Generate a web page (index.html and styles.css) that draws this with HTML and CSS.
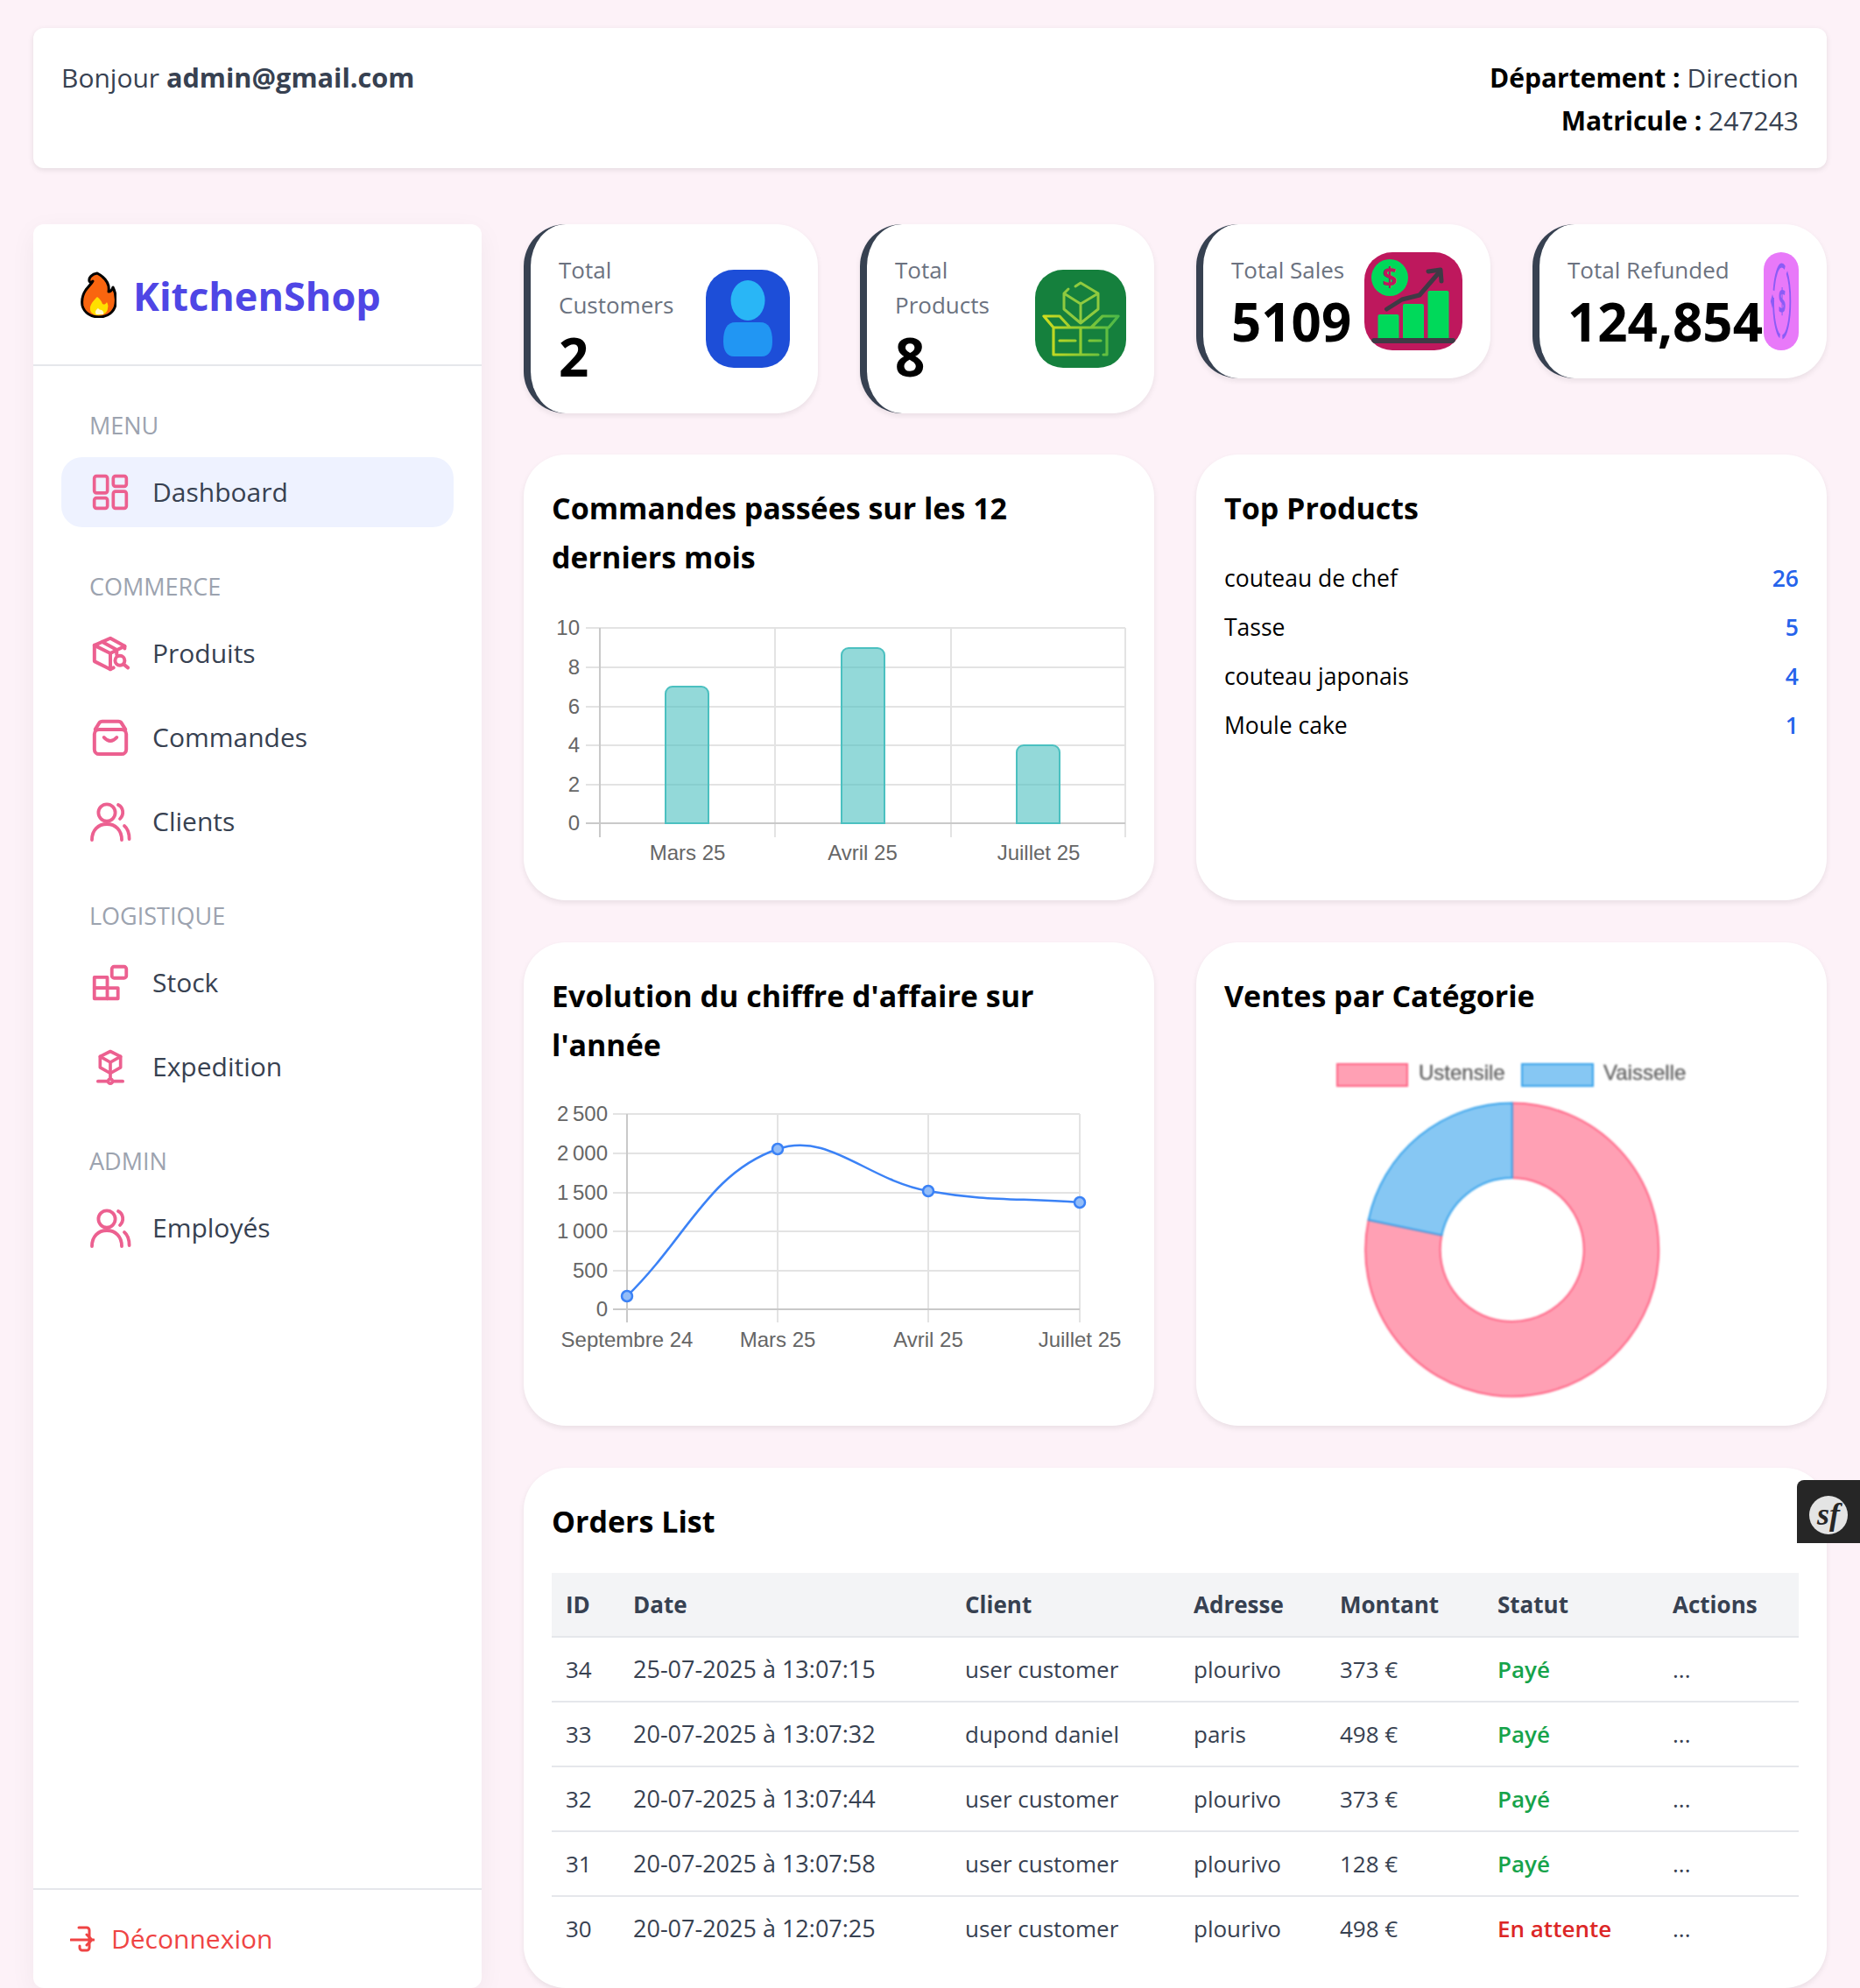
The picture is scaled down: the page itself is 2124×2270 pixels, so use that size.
FILE: index.html
```html
<!DOCTYPE html>
<html lang="fr">

<head>
    <meta charset="UTF-8">
    <meta name="viewport" content="width=device-width, initial-scale=1.0">
    <title>KitchenShop - Dashboard</title>
    <link rel="stylesheet" href="styles.css">
</head>

<body>
    <header class="top-bar">
        <div>Bonjour <strong class="user-mail">admin@gmail.com</strong></div>
        <div class="top-info">
            <div><strong>Département :</strong> Direction</div>
            <div><strong>Matricule :</strong> 247243</div>
        </div>
    </header>

    <div class="layout">
        <aside class="sidebar">
            <div class="logo">
                <svg class="flame" viewBox="0 0 41 53">
                    <path d="M19 2C13 3 9 7 10 11C11 13 13 12 14 11C13 13 9 17 6 21C2 27 1 33 2 39C4 47 12 52 21 52C31 52 39 46 40 37C41 30 40 24 37 18C36 21 34 23 32 23C33 17 31 11 25 6C23 4 21 3 19 2Z" fill="#f9650f" stroke="#000" stroke-width="3" stroke-linejoin="round"/>
                    <path d="M19 29C15 33 10 38 11 44C12 48 16 50 20 50C26 50 31 47 31 42C32 39 31 37 30 35C28 38 27 38 25 37C24 34 22 31 19 29Z" fill="#ffdf00"/>
                    <path d="M20 42C17 44 16 47 18 49H26C27 47 26 45 24 44C22 44 21 43 20 42Z" fill="#fff8d0"/>
                </svg>
                <span>KitchenShop</span>
            </div>

            <nav class="nav">
                <div class="nav-group">
                    <div class="nav-label">MENU</div>
                    <a class="nav-link active">
                        <svg class="nav-icon" viewBox="0 0 24 24">
                            <rect x="1" y="1" width="9" height="11.5" rx="1.5"/>
                            <rect x="14" y="1" width="9" height="7" rx="1.5"/>
                            <rect x="1" y="16" width="9" height="7" rx="1.5"/>
                            <rect x="14" y="11.5" width="9" height="11.5" rx="1.5"/>
                        </svg>
                        Dashboard
                    </a>
                </div>

                <div class="nav-group">
                    <div class="nav-label">COMMERCE</div>
                    <a class="nav-link">
                        <svg class="nav-icon" viewBox="1 1 22 22">
                            <path d="M21 9V7.5L12 2.5 2 7v10l10 5 2-1"/>
                            <path d="M2 7l10 5 9-4.5M12 12v10M7 4.8l9 5v3"/>
                            <circle cx="18" cy="16.5" r="3"/>
                            <path d="M20.3 18.8L23 21"/>
                        </svg>
                        Produits
                    </a>
                    <a class="nav-link">
                        <svg class="nav-icon" viewBox="1 1 22 22">
                            <rect x="2" y="7" width="20" height="15.5" rx="3"/>
                            <path d="M2.5 7L5 3Q5.6 2 7 2H17Q18.4 2 19 3L21.5 7"/>
                            <path d="M8 12Q12 16.5 16 12"/>
                        </svg>
                        Commandes
                    </a>
                    <a class="nav-link">
                        <svg class="nav-icon people" viewBox="2 2 20 20">
                            <circle cx="10" cy="7" r="4.8"/>
                            <path d="M1.5 22.5C1.5 17 5 13.5 10 13.5S18.5 17 18.5 22.5"/>
                            <path d="M16.5 2.5C19.5 4 20 8 17.5 10.5M20 14.5C21.8 16 22.8 19 22.8 22"/>
                        </svg>
                        Clients
                    </a>
                </div>

                <div class="nav-group">
                    <div class="nav-label">LOGISTIQUE</div>
                    <a class="nav-link">
                        <svg class="nav-icon" viewBox="0.5 0.5 23 23">
                            <rect x="1.5" y="8.5" width="8.5" height="7"/>
                            <rect x="1.5" y="15.5" width="15.5" height="7"/>
                            <path d="M10 15.5v7"/>
                            <rect x="13" y="1.5" width="9.5" height="7.5" rx="1.5"/>
                        </svg>
                        Stock
                    </a>
                    <a class="nav-link">
                        <svg class="nav-icon" viewBox="0 0 24 24">
                            <path d="M12 1.5L19 5V12.5L12 16.5 5 12.5V5Z"/>
                            <path d="M5 5l7 4 7-4M12 9v7.5M12 16.5v3"/>
                            <path d="M3.5 22h6M14.5 22h6"/>
                            <circle cx="12" cy="22" r="1.5"/>
                        </svg>
                        Expedition
                    </a>
                </div>

                <div class="nav-group">
                    <div class="nav-label">ADMIN</div>
                    <a class="nav-link">
                        <svg class="nav-icon people" viewBox="2 2 20 20">
                            <circle cx="10" cy="7" r="4.8"/>
                            <path d="M1.5 22.5C1.5 17 5 13.5 10 13.5S18.5 17 18.5 22.5"/>
                            <path d="M16.5 2.5C19.5 4 20 8 17.5 10.5M20 14.5C21.8 16 22.8 19 22.8 22"/>
                        </svg>
                        Employés
                    </a>
                </div>
            </nav>

            <div class="sidebar-foot">
                <a class="logout">
                    <svg class="logout-icon" viewBox="0 0 28 30">
                        <path d="M10 2h9a3 3 0 0 1 3 3v20a3 3 0 0 1-3 3h-5a3 3 0 0 1-3-3v-2"/>
                        <path d="M1 16h26M19 10l6 6-6 6"/>
                    </svg>
                    Déconnexion
                </a>
            </div>
        </aside>

        <main class="content">
            <div class="stat-card">
                <div class="stat-text">
                    <div class="stat-label">Total Customers</div>
                    <div class="stat-value">2</div>
                </div>
                <svg class="stat-icon icon-customers" viewBox="0 0 96 112">
                    <ellipse cx="48" cy="35" rx="19.5" ry="23" fill="#29b6f6"/>
                    <path d="M20 82C20 68 24 60 34 60H62C72 60 76 68 76 82C76 92 72 99 64 99H32C24 99 20 92 20 82Z" fill="#2196f3"/>
                </svg>
            </div>

            <div class="stat-card">
                <div class="stat-text">
                    <div class="stat-label">Total Products</div>
                    <div class="stat-value">8</div>
                </div>
                <svg class="stat-icon icon-products" viewBox="0 0 104 112">
                    <defs>
                        <linearGradient id="boxGrad" x1="0" y1="0" x2="1" y2="0">
                            <stop offset="0" stop-color="#cfdc1e"/>
                            <stop offset="1" stop-color="#4cb848"/>
                        </linearGradient>
                    </defs>
                    <g fill="none" stroke="#8fca3f" stroke-width="3" stroke-linecap="round" stroke-linejoin="round">
                        <path d="M46 19L52 15 72 27V45L52 61 33 45V27L38 22M33 27L52 39 72 27M52 39V61"/>
                    </g>
                    <path d="M10 53H28L40 66H21ZM95 53H77L64 66H84ZM21 66V97H72M78 97H82V66M21 66H82M52 66V97M28 81H46M62 81H75" fill="none" stroke="url(#boxGrad)" stroke-width="3.2" stroke-linecap="round" stroke-linejoin="round"/>
                </svg>
            </div>

            <div class="stat-card">
                <div class="stat-text">
                    <div class="stat-label">Total Sales</div>
                    <div class="stat-value">5109</div>
                </div>
                <svg class="stat-icon icon-sales" viewBox="0 0 112 112">
                    <circle cx="29" cy="29" r="21" fill="#00d95a"/>
                    <text x="29" y="39" text-anchor="middle" class="dollar">$</text>
                    <rect x="15.5" y="71" width="24" height="29" rx="2" fill="#00d95a"/>
                    <rect x="44" y="59" width="24" height="41" rx="2" fill="#00d95a"/>
                    <rect x="72.5" y="44" width="24" height="56" rx="2" fill="#00d95a"/>
                    <path d="M25.5 65L43 54 63 49 84.5 24" fill="none" stroke="#3f3a45" stroke-width="5" stroke-linecap="round" stroke-linejoin="round"/>
                    <path d="M73 22L87 20 88 33" fill="none" stroke="#3f3a45" stroke-width="5" stroke-linecap="round" stroke-linejoin="round"/>
                    <rect x="8" y="98" width="96" height="6" rx="3" fill="#3f3a45"/>
                </svg>
            </div>

            <div class="stat-card">
                <div class="stat-text">
                    <div class="stat-label">Total Refunded</div>
                    <div class="stat-value">124,854</div>
                </div>
                <svg class="stat-icon icon-refund" viewBox="0 0 112 112" preserveAspectRatio="none">
                    <ellipse cx="58" cy="56" rx="27" ry="41" fill="none" stroke="#8b5cf6" stroke-width="5" stroke-dasharray="52 8"/>
                    <path d="M28 48L34 56 28 64 22 56Z" fill="#8b5cf6"/>
                    <text x="58" y="70" text-anchor="middle" class="refund-sign">$</text>
                </svg>
            </div>

            <section class="card wide">
                <h2 class="card-title">Commandes passées sur les 12 derniers mois</h2>
                <svg class="chart chart-bars" viewBox="0 0 656 315">
                    <g class="grid">
                        <path d="M39 36H655M39 81H655M39 126H655M39 170H655M39 215H655"/>
                        <path d="M255 36V275M456 36V275M655 36V275"/>
                    </g>
                    <path class="axis" d="M55 36V275M39 259H655"/>
                    <g class="bar">
                        <path d="M130 259V111a8 8 0 0 1 8-8H171a8 8 0 0 1 8 8V259Z"/>
                        <path d="M331 259V67a8 8 0 0 1 8-8H372a8 8 0 0 1 8 8V259Z"/>
                        <path d="M531 259V178a8 8 0 0 1 8-8H572a8 8 0 0 1 8 8V259Z"/>
                    </g>
                    <g class="tick-y">
                        <text x="32" y="44">10</text>
                        <text x="32" y="89">8</text>
                        <text x="32" y="134">6</text>
                        <text x="32" y="178">4</text>
                        <text x="32" y="223">2</text>
                        <text x="32" y="267">0</text>
                    </g>
                    <g class="tick-x">
                        <text x="155" y="301">Mars 25</text>
                        <text x="355" y="301">Avril 25</text>
                        <text x="556" y="301">Juillet 25</text>
                    </g>
                </svg>
            </section>

            <section class="card wide">
                <h2 class="card-title">Top Products</h2>
                <ul class="top-list">
                    <li>couteau de chef <span class="top-count">26</span></li>
                    <li>Tasse <span class="top-count">5</span></li>
                    <li>couteau japonais <span class="top-count">4</span></li>
                    <li>Moule cake <span class="top-count">1</span></li>
                </ul>
            </section>

            <section class="card wide">
                <h2 class="card-title">Evolution du chiffre d'affaire sur l'année</h2>
                <svg class="chart chart-line" viewBox="0 0 656 360">
                    <g class="grid">
                        <path d="M70 36H603M70 81H603M70 126H603M70 170H603M70 215H603"/>
                        <path d="M258 36V274M430 36V274M603 36V274"/>
                    </g>
                    <path class="axis" d="M86 36V274M70 259H603"/>
                    <path class="line" d="M86 244C154.8 176.8 179 103.6 258 76C316.6 55.6 360 111.6 430 124C498 136 534 131.8 603 137"/>
                    <g class="dot">
                        <circle cx="86" cy="244" r="6"/>
                        <circle cx="258" cy="76" r="6"/>
                        <circle cx="430" cy="124" r="6"/>
                        <circle cx="603" cy="137" r="6"/>
                    </g>
                    <g class="tick-y">
                        <text x="64" y="44">2 500</text>
                        <text x="64" y="89">2 000</text>
                        <text x="64" y="134">1 500</text>
                        <text x="64" y="178">1 000</text>
                        <text x="64" y="223">500</text>
                        <text x="64" y="267">0</text>
                    </g>
                    <g class="tick-x">
                        <text x="86" y="302">Septembre 24</text>
                        <text x="258" y="302">Mars 25</text>
                        <text x="430" y="302">Avril 25</text>
                        <text x="603" y="302">Juillet 25</text>
                    </g>
                </svg>
            </section>

            <section class="card wide">
                <h2 class="card-title">Ventes par Catégorie</h2>
                <svg class="chart chart-donut" viewBox="0 0 656 416">
                    <rect class="pink" x="129" y="35" width="80" height="25"/>
                    <text class="legend" x="222" y="53">Ustensile</text>
                    <rect class="blue" x="340" y="35" width="81" height="25"/>
                    <text class="legend" x="433" y="53">Vaisselle</text>
                    <path class="pink" d="M328.7 79.5A167.5 167.5 0 1 1 164.7 213L248.4 230.4A82 82 0 1 0 328.7 165Z"/>
                    <path class="blue" d="M328.7 79.5A167.5 167.5 0 0 0 164.7 213L248.4 230.4A82 82 0 0 1 328.7 165Z"/>
                </svg>
            </section>

            <section class="card full">
                <h2 class="card-title orders-title">Orders List</h2>
                <table class="orders">
                    <colgroup>
                        <col class="c-id"><col class="c-date"><col class="c-client"><col class="c-addr"><col class="c-amount"><col class="c-status"><col class="c-actions">
                    </colgroup>
                    <thead>
                        <tr><th>ID</th><th>Date</th><th>Client</th><th>Adresse</th><th>Montant</th><th>Statut</th><th>Actions</th></tr>
                    </thead>
                    <tbody>
                        <tr><td>34</td><td class="date">25-07-2025 à 13:07:15</td><td>user customer</td><td>plourivo</td><td>373 €</td><td class="paid">Payé</td><td>...</td></tr>
                        <tr><td>33</td><td class="date">20-07-2025 à 13:07:32</td><td>dupond daniel</td><td>paris</td><td>498 €</td><td class="paid">Payé</td><td>...</td></tr>
                        <tr><td>32</td><td class="date">20-07-2025 à 13:07:44</td><td>user customer</td><td>plourivo</td><td>373 €</td><td class="paid">Payé</td><td>...</td></tr>
                        <tr><td>31</td><td class="date">20-07-2025 à 13:07:58</td><td>user customer</td><td>plourivo</td><td>128 €</td><td class="paid">Payé</td><td>...</td></tr>
                        <tr><td>30</td><td class="date">20-07-2025 à 12:07:25</td><td>user customer</td><td>plourivo</td><td>498 €</td><td class="pending">En attente</td><td>...</td></tr>
                    </tbody>
                </table>
            </section>
        </main>
    </div>

    <div class="sf-toolbar">
        <div class="sf-badge">sf</div>
    </div>
</body>

</html>
```

FILE: styles.css
```css
* {
    box-sizing: border-box;
    margin: 0;
    padding: 0;
}

html,
body {
    background-color: #fdf2f8;
}

body {
    font-family: "Open Sans", "Noto Sans", sans-serif;
    font-size: 30px;
    line-height: 48px;
    color: #374151;
    padding: 32px 38px 0;
    height: 2270px;
    overflow: hidden;
    position: relative;
}

strong {
    font-weight: 700;
}

.top-bar {
    background-color: #fff;
    border-radius: 12px;
    box-shadow: 0 2px 6px rgba(0, 0, 0, 0.1);
    display: flex;
    justify-content: space-between;
    height: 160px;
    padding: 32px;
    margin-bottom: 64px;
}

.user-mail {
    font-size: 30.7px;
}

.top-info {
    text-align: right;
    line-height: 49px;
}

.top-info strong {
    color: #000;
}

.layout {
    display: grid;
    grid-template-columns: 512px 1fr;
    gap: 48px;
}

/* sidebar */
.sidebar {
    background-color: #fff;
    border-radius: 12px;
    box-shadow: 0 8px 30px rgba(0, 0, 0, 0.05);
    display: flex;
    flex-direction: column;
    height: 2014px;
}

.logo {
    height: 162px;
    border-bottom: 2px solid #e5e7eb;
    display: flex;
    align-items: center;
    gap: 19px;
    padding: 4px 0 0 54px;
    font-size: 45px;
    font-weight: 700;
    color: #4f46e5;
}

.flame {
    width: 41px;
    height: 53px;
    margin-top: -4px;
}

.nav {
    flex: 1;
    padding: 48px 32px 0;
    display: flex;
    flex-direction: column;
    gap: 48px;
}

.nav-group {
    display: flex;
    flex-direction: column;
    gap: 16px;
}

.nav-label {
    font-size: 27px;
    line-height: 40px;
    color: #9ca3af;
    padding-left: 32px;
}

.nav-link {
    height: 80px;
    border-radius: 24px;
    display: flex;
    align-items: center;
    gap: 28px;
    padding-left: 36px;
}

.nav-link.active {
    background-color: #eef2ff;
    font-weight: 500;
}

.nav-icon {
    width: 40px;
    height: 40px;
    overflow: visible;
    fill: none;
    stroke: #ec6090;
    stroke-width: 2.2;
    stroke-linecap: round;
    stroke-linejoin: round;
}

.nav-icon.people {
    stroke-width: 1.9;
}

.sidebar-foot {
    border-top: 2px solid #e5e7eb;
    padding: 32px 32px 32px 42px;
}

.logout {
    display: flex;
    align-items: center;
    gap: 19px;
    color: #ef4444;
}

.logout-icon {
    width: 28px;
    height: 30px;
    fill: none;
    stroke: #ef4444;
    stroke-width: 3;
    stroke-linecap: round;
    stroke-linejoin: round;
}

/* main grid */
.content {
    display: grid;
    grid-template-columns: repeat(4, 1fr);
    gap: 48px;
    align-items: start;
}

.stat-card {
    background-color: #fff;
    border-left: 8px solid #374151;
    border-radius: 48px;
    box-shadow: 0 3px 6px rgba(0, 0, 0, 0.08);
    display: flex;
    justify-content: space-between;
    align-items: center;
    padding: 32px;
    margin-bottom: -1px;
}

.stat-label {
    font-size: 26px;
    line-height: 40px;
    color: #6b7280;
}

.stat-value {
    font-size: 60px;
    line-height: 72px;
    font-weight: 700;
    color: #000;
    margin: 3px 0 -3px;
}

.stat-icon {
    flex: none;
    height: 112px;
    border-radius: 32px;
}

.icon-customers {
    width: 96px;
    background-color: #1d4ed8;
}

.icon-products {
    width: 104px;
    background-color: #15803d;
}

.icon-sales {
    width: 112px;
    background-color: #be185d;
}

.icon-refund {
    width: 40px;
    background-color: #e879f9;
}

.dollar {
    font-family: "Open Sans", sans-serif;
    font-size: 30px;
    font-weight: 700;
    fill: #be185d;
}

.refund-sign {
    font-family: "Open Sans", sans-serif;
    font-size: 40px;
    font-weight: 700;
    fill: #8b5cf6;
}

.card {
    background-color: #fff;
    border-radius: 48px;
    box-shadow: 0 3px 6px rgba(0, 0, 0, 0.08);
    padding: 32px;
}

.wide {
    grid-column: span 2;
    align-self: stretch;
}

.full {
    grid-column: span 4;
}

.card-title {
    font-size: 34px;
    line-height: 56px;
    font-weight: 700;
    color: #000;
    padding-top: 1px;
    margin-bottom: 15px;
}

.orders-title {
    margin-bottom: 31px;
}

/* charts */
.chart {
    display: block;
    width: 656px;
}

.chart-bars {
    height: 315px;
    margin-top: 17px;
}

.chart-line {
    height: 360px;
}

.chart-line .tick-y text {
    word-spacing: -2px;
}

.chart-donut {
    height: 416px;
    filter: blur(0.8px);
}

.chart text {
    font-family: "Liberation Sans", Arial, sans-serif;
    font-size: 24px;
    fill: #666;
}

.chart .legend {
    stroke: #666;
    stroke-width: 0.4;
}

.grid path {
    fill: none;
    stroke: #e3e3e3;
    stroke-width: 2;
}

.axis {
    fill: none;
    stroke: #c9c9c9;
    stroke-width: 2;
}

.tick-y text {
    text-anchor: end;
}

.tick-x text {
    text-anchor: middle;
}

.bar path {
    fill: rgba(75, 192, 192, 0.6);
    stroke: #4bc0c0;
    stroke-width: 2;
}

.line {
    fill: none;
    stroke: #3b82f6;
    stroke-width: 2.5;
}

.dot circle {
    fill: #93bdf8;
    stroke: #3b82f6;
    stroke-width: 2.5;
}

.pink {
    fill: #ffa0b4;
    stroke: #ff6384;
    stroke-width: 2;
}

.blue {
    fill: #86c7f3;
    stroke: #36a2eb;
    stroke-width: 2;
}

/* top products */
.top-list {
    list-style: none;
    margin-top: 32px;
    display: flex;
    flex-direction: column;
    gap: 16px;
    font-size: 26.5px;
    line-height: 40px;
    color: #000;
}

.top-list li {
    display: flex;
    justify-content: space-between;
}

.top-count {
    color: #2563eb;
    font-weight: 600;
}

/* orders table */
.orders {
    width: 100%;
    table-layout: fixed;
    border-collapse: collapse;
    font-size: 26px;
    line-height: 40px;
}

.c-id { width: 77px; }
.c-date { width: 379px; }
.c-client { width: 261px; }
.c-addr { width: 167px; }
.c-amount { width: 180px; }
.c-status { width: 200px; }
.c-actions { width: 160px; }

.orders th {
    background-color: #f3f4f6;
    border-bottom: 2px solid #e5e7eb;
    font-weight: 700;
    text-align: left;
    padding: 16px;
}

.orders td {
    padding: 16px;
    border-bottom: 2px solid #e5e7eb;
}

.orders tr:last-child td {
    border-bottom: none;
}

.orders .date {
    font-size: 27px;
}

.orders .paid {
    color: #16a34a;
    font-weight: 600;
}

.orders .pending {
    color: #dc2626;
    font-weight: 600;
}

/* profiler badge over the page edge */
.sf-toolbar {
    position: absolute;
    top: 1690px;
    right: 0;
    width: 72px;
    height: 72px;
    padding-top: 8px;
    background-color: #262626;
    border-top-left-radius: 8px;
    display: flex;
    align-items: center;
    justify-content: center;
}

.sf-badge {
    width: 44px;
    height: 44px;
    border-radius: 50%;
    background-color: #e4e4e4;
    color: #262626;
    font-family: "Liberation Serif", serif;
    font-style: italic;
    font-weight: 700;
    font-size: 36px;
    line-height: 42px;
    text-align: center;
}
```
